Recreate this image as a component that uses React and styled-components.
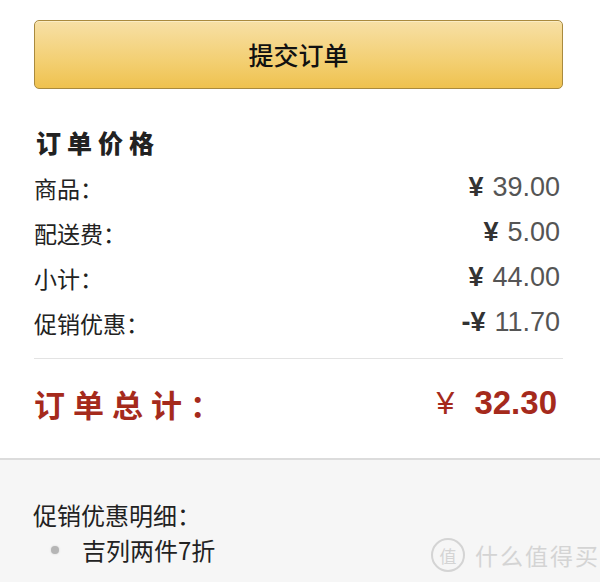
import React from "react";
import styled, { createGlobalStyle } from "styled-components";

const GlobalStyle = createGlobalStyle`
  html, body {
    margin: 0;
    padding: 0;
    background: #fff;
  }
  body {
    font-family: "Liberation Sans", "Noto Sans CJK SC", sans-serif;
    color: #222;
  }
`;

const priceRows = [
  { label: "商品：", value: "39.00" },
  { label: "配送费：", value: "5.00" },
  { label: "小计：", value: "44.00" },
  { label: "促销优惠：", value: "11.70", minus: true },
];

const App = () => {
  return (
    <>
      <GlobalStyle />
      <Page>
        <Summary>
          <SubmitButton>提交订单</SubmitButton>
          <Heading>订单价格</Heading>
          {priceRows.map((row) => (
            <Row key={row.label}>
              <Label>{row.label}</Label>
              <Value>
                <Yen>{row.minus ? "-¥" : "¥"}</Yen>
                <Amount>{row.value}</Amount>
              </Value>
            </Row>
          ))}
          <Divider />
          <TotalRow>
            <TotalLabel>订单总计：</TotalLabel>
            <TotalValue>
              <TotalYen>¥</TotalYen>
              <TotalAmount>32.30</TotalAmount>
            </TotalValue>
          </TotalRow>
        </Summary>
        <Promo>
          <PromoTitle>促销优惠明细：</PromoTitle>
          <PromoList>
            <PromoItem>吉列两件7折</PromoItem>
          </PromoList>
          <Watermark>
            <Badge>值</Badge>
            什么值得买
          </Watermark>
        </Promo>
      </Page>
    </>
  );
};

const Page = styled.div`
  width: 600px;
  height: 582px;
  display: flex;
  flex-direction: column;
  overflow: hidden;
`;

const Summary = styled.div`
  padding: 20px 37px 0 34px;
  display: flex;
  flex-direction: column;
`;

const SubmitButton = styled.button`
  height: 69px;
  width: 100%;
  border: 1px solid #a98a3e;
  border-radius: 5px;
  background: linear-gradient(to bottom, #f7e0a6 0%, #f3cf72 60%, #efc24f 100%);
  box-shadow: inset 0 1px 0 #fbecc4;
  font-family: "Noto Sans CJK SC", sans-serif;
  font-size: 25px;
  font-weight: 500;
  color: #111;
  padding: 0 0 2px;
  cursor: pointer;
`;

const Heading = styled.h3`
  margin: 38px 0 8px 2px;
  font-family: "Noto Sans CJK SC", sans-serif;
  font-size: 25px;
  line-height: 30px;
  font-weight: 900;
  letter-spacing: 6px;
  color: #222;
`;

const Row = styled.div`
  display: flex;
  justify-content: space-between;
  align-items: center;
  height: 45px;
`;

const Label = styled.span`
  font-family: "Noto Sans CJK SC", sans-serif;
  font-size: 23px;
  color: #222;
`;

const Value = styled.span`
  display: flex;
  align-items: baseline;
  gap: 9px;
  padding-right: 3px;
`;

const Yen = styled.span`
  font-family: "Liberation Sans", sans-serif;
  font-size: 27px;
  font-weight: 700;
  color: #333;
`;

const Amount = styled.span`
  font-family: "Liberation Sans", sans-serif;
  font-size: 27px;
  color: #555;
`;

const Divider = styled.hr`
  margin: 13px 0 0;
  border: 0;
  border-top: 1px solid #e3e3e3;
`;

const TotalRow = styled.div`
  display: flex;
  justify-content: space-between;
  align-items: center;
  height: 60px;
  margin: 14px 0 25px;
`;

const TotalLabel = styled.span`
  font-family: "Noto Sans CJK SC", sans-serif;
  font-size: 31px;
  font-weight: 700;
  letter-spacing: 8px;
  color: #a52a1c;
`;

const TotalValue = styled.span`
  display: flex;
  align-items: baseline;
  gap: 20px;
  padding-right: 6px;
  color: #a52a1c;
`;

const TotalYen = styled.span`
  font-family: "Liberation Sans", sans-serif;
  font-size: 32px;
`;

const TotalAmount = styled.span`
  font-family: "Liberation Sans", sans-serif;
  font-size: 33px;
  font-weight: 700;
`;

const Promo = styled.div`
  position: relative;
  flex: 1;
  background: #f6f6f6;
  border-top: 2px solid #dcdcdc;
  padding: 38px 34px 0 33px;
`;

const PromoTitle = styled.div`
  font-family: "Noto Sans CJK SC", sans-serif;
  font-size: 24px;
  line-height: 34px;
  color: #222;
`;

const PromoList = styled.ul`
  margin: 0;
  padding: 0;
  list-style: none;
`;

const PromoItem = styled.li`
  position: relative;
  padding-left: 49px;
  font-family: "Noto Sans CJK SC", sans-serif;
  font-size: 24px;
  line-height: 36px;
  color: #222;

  &::before {
    content: "";
    position: absolute;
    left: 18px;
    top: 14px;
    width: 8px;
    height: 8px;
    border-radius: 50%;
    background: #b5b5b5;
    box-shadow: 0 0 2px #ccc;
  }
`;

const Watermark = styled.div`
  position: absolute;
  right: 0;
  bottom: 10px;
  display: flex;
  align-items: center;
  gap: 10px;
  font-family: "Noto Sans CJK SC", sans-serif;
  font-size: 23px;
  letter-spacing: 2px;
  color: #d4d4d4;
`;

const Badge = styled.span`
  display: inline-flex;
  align-items: center;
  justify-content: center;
  width: 30px;
  height: 30px;
  border: 2px solid #d4d4d4;
  border-radius: 50%;
  font-size: 17px;
  letter-spacing: 0;
`;

export default App;
